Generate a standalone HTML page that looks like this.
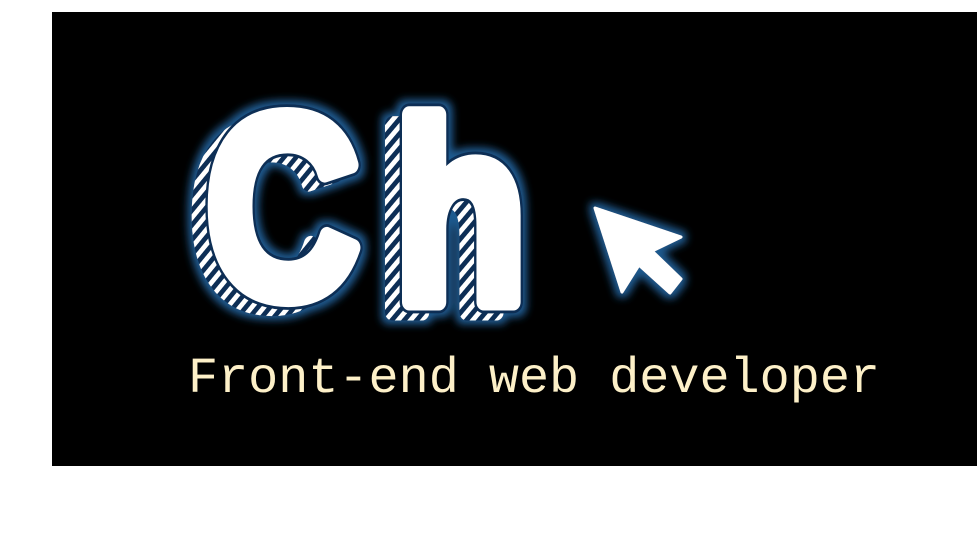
<!DOCTYPE html>
<html><head><style>
html,body{margin:0;padding:0;background:#fff;width:977px;height:547px;overflow:hidden}
</style></head><body>
<svg width="977" height="547" viewBox="0 0 977 547" style="position:absolute;left:0;top:0">
<defs>
<pattern id="hat" width="11" height="11" patternUnits="userSpaceOnUse" patternTransform="rotate(45)">
<rect width="11" height="11" fill="#0d2f55"/>
<rect x="0" width="5.5" height="11" fill="#fff"/>
</pattern>
<filter id="glow" x="-20%" y="-20%" width="140%" height="140%">
<feMorphology in="SourceAlpha" operator="dilate" radius="4" result="d"/>
<feGaussianBlur in="d" stdDeviation="4" result="b"/>
<feFlood flood-color="#1f5a8f"/>
<feComposite in2="b" operator="in" result="g"/>
<feMerge><feMergeNode in="g"/><feMergeNode in="SourceGraphic"/></feMerge>
</filter>
</defs>
<rect x="52" y="12" width="925" height="454" fill="#000"/>
<g filter="url(#glow)" font-family="Liberation Sans, sans-serif" font-weight="bold" stroke-linejoin="round">
<g transform="translate(190,305) scale(0.78,0.95)">
<text x="0" y="0" font-size="272" fill="url(#hat)" stroke="url(#hat)" stroke-width="18">C</text>
</g>
<g transform="translate(206,296) scale(0.78,0.95)">
<text x="0" y="0" font-size="272" fill="#fff" stroke="#0d2f55" stroke-width="24">C</text>
<text x="0" y="0" font-size="272" fill="#fff" stroke="#fff" stroke-width="18">C</text>
</g>
<g transform="translate(377,312) scale(0.8,0.95)">
<text x="0" y="0" font-size="272" fill="url(#hat)" stroke="url(#hat)" stroke-width="18">h</text>
</g>
<g transform="translate(394,302) scale(0.8,0.95)">
<text x="0" y="0" font-size="272" fill="#fff" stroke="#0d2f55" stroke-width="24">h</text>
<text x="0" y="0" font-size="272" fill="#fff" stroke="#fff" stroke-width="18">h</text>
</g>
<path d="M595,208 L681,237 L652,251 L681,279 L670,293 L639,265 L622,292 Z" fill="#fff" stroke="#fff" stroke-width="3"/>
</g>
<text x="188" y="392" font-family="Liberation Mono, monospace" font-size="50" fill="#fdf0c8" textLength="692" lengthAdjust="spacingAndGlyphs">Front-end web developer</text>
</svg>
</body></html>
